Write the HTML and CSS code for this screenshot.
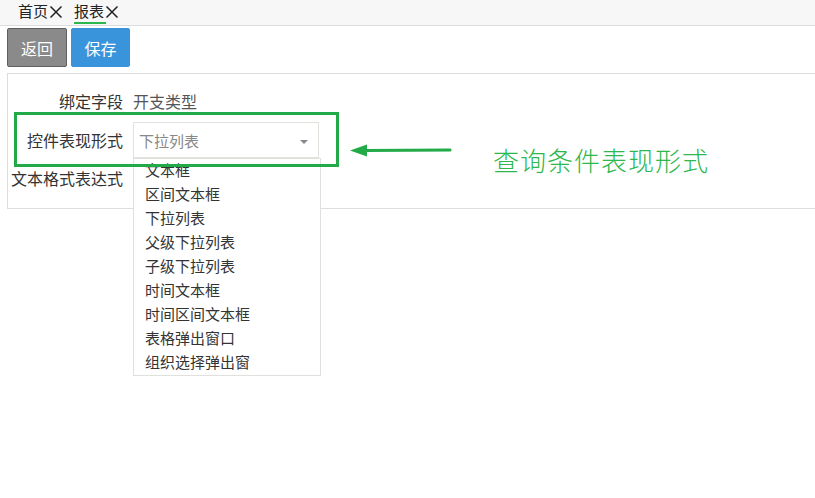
FILE: index.html
```html
<!DOCTYPE html>
<html lang="zh">
<head>
<meta charset="utf-8">
<link rel="stylesheet" href="styles.css">
</head>
<body>
<div class="page">
  <div class="tabs">
    <div class="tab"><span class="tab-text">首页</span><svg class="x" viewBox="0 0 14 14" width="14" height="14"><path d="M1.5 1.5 L12.5 12.5 M12.5 1.5 L1.5 12.5" stroke="#222" stroke-width="1.5" fill="none"/></svg></div>
    <div class="tab active"><span class="tab-text">报表</span><svg class="x" viewBox="0 0 14 14" width="14" height="14"><path d="M1.5 1.5 L12.5 12.5 M12.5 1.5 L1.5 12.5" stroke="#222" stroke-width="1.5" fill="none"/></svg></div>
  </div>
  <div class="toolbar">
    <button class="btn btn-back">返回</button>
    <button class="btn btn-save">保存</button>
  </div>
  <div class="panel">
    <div class="row row1">
      <div class="label">绑定字段</div>
      <div class="value">开支类型</div>
    </div>
    <div class="row row2">
      <div class="label">控件表现形式</div>
      <div class="select-wrap">
        <div class="select"><span>下拉列表</span><i class="caret"></i></div>
        <ul class="dropdown">
          <li>文本框</li>
          <li>区间文本框</li>
          <li>下拉列表</li>
          <li>父级下拉列表</li>
          <li>子级下拉列表</li>
          <li>时间文本框</li>
          <li>时间区间文本框</li>
          <li>表格弹出窗口</li>
          <li>组织选择弹出窗</li>
        </ul>
      </div>
    </div>
    <div class="row row3">
      <div class="label">文本格式表达式</div>
    </div>
  </div>
  <div class="note-box"></div>
  <svg class="note-arrow" viewBox="0 0 106 16" width="106" height="16"><path d="M18 7.5 L102 7" stroke="#23aa48" stroke-width="3" stroke-linecap="round" fill="none"/><path d="M2 7.5 L19 1.5 L19 13.5 Z" fill="#23aa48"/></svg>
  <div class="note-text">查询条件表现形式</div>
</div>
</body>
</html>
```
FILE: styles.css
```css
* { box-sizing: border-box; }
html, body { margin: 0; padding: 0; background: #fff; }
body {
  font-family: "Noto Sans CJK SC", "Microsoft YaHei", sans-serif;
  color: #333;
  width: 815px;
  height: 498px;
  overflow: hidden;
}
.page { position: relative; width: 815px; height: 498px; }

.tabs {
  height: 26px;
  background: #f7f7f7;
  border-bottom: 1px solid #ddd;
  display: flex;
  padding-left: 18px;
  gap: 11px;
}
.tab {
  display: flex;
  align-items: flex-start;
  position: relative;
  height: 25px;
}
.tab-text {
  font-size: 15px;
  line-height: 22px;
  color: #222;
}
.tab .x { margin-top: 5px; margin-left: 1px; }
.tab.active::after {
  content: "";
  position: absolute;
  left: 0;
  top: 22px;
  width: 32px;
  height: 2px;
  background: #2db84d;
}

.toolbar {
  display: flex;
  gap: 4px;
  padding: 2px 0 0 7px;
  height: 41px;
}
.btn {
  font-family: inherit;
  font-size: 16px;
  color: #fff;
  height: 39px;
  border-radius: 2px;
  padding: 0;
  cursor: pointer;
}
.btn-back { width: 60px; background: #8a8a8a; border: 1px solid #5f5f5f; }
.btn-save { width: 59px; background: #3a94db; border: 1px solid #3a94db; }

.panel {
  margin: 6px 0 0 7px;
  width: 820px;
  height: 136px;
  border: 1px solid #ddd;
  padding-top: 14px;
}
.row { display: flex; align-items: center; }
.label {
  width: 115px;
  text-align: right;
  font-size: 16px;
  color: #333;
  flex: none;
}
.row1 { height: 28px; align-items: flex-start; }
.row1 .label { line-height: 27px; }
.value {
  margin-left: 10px;
  width: 180px;
  height: 27px;
  line-height: 27px;
  font-size: 16px;
  color: #555;
  border-bottom: 1px solid #e2e2e2;
}
.row2 { margin-top: 6px; height: 36px; }
.select-wrap { margin-left: 10px; position: relative; }
.select {
  width: 186px;
  height: 36px;
  border: 1px solid #e3e3de;
  display: flex;
  align-items: center;
  padding-left: 5px;
  font-size: 15px;
  color: #888;
  position: relative;
}
.caret {
  position: absolute;
  right: 10px;
  top: 17px;
  width: 0;
  height: 0;
  border-left: 4px solid transparent;
  border-right: 4px solid transparent;
  border-top: 4px solid #888;
}
.dropdown {
  position: absolute;
  left: 0;
  top: 36px;
  width: 188px;
  margin: 0;
  padding: 0;
  list-style: none;
  background: #fff;
  border: 1px solid #e0e0dc;
  z-index: 5;
}
.dropdown li {
  height: 24px;
  line-height: 22px;
  padding-left: 11px;
  font-size: 15px;
  color: #333;
}
.row3 { height: 40px; }

.note-box {
  position: absolute;
  left: 14px;
  top: 112px;
  width: 325px;
  height: 55px;
  border: 3px solid #23aa48;
  z-index: 10;
}
.note-arrow {
  position: absolute;
  left: 348px;
  top: 143px;
}
.note-text {
  position: absolute;
  left: 493px;
  top: 142px;
  font-size: 26px;
  line-height: 36px;
  color: #2db84d;
  font-weight: 300;
  letter-spacing: 1px;
}
```
